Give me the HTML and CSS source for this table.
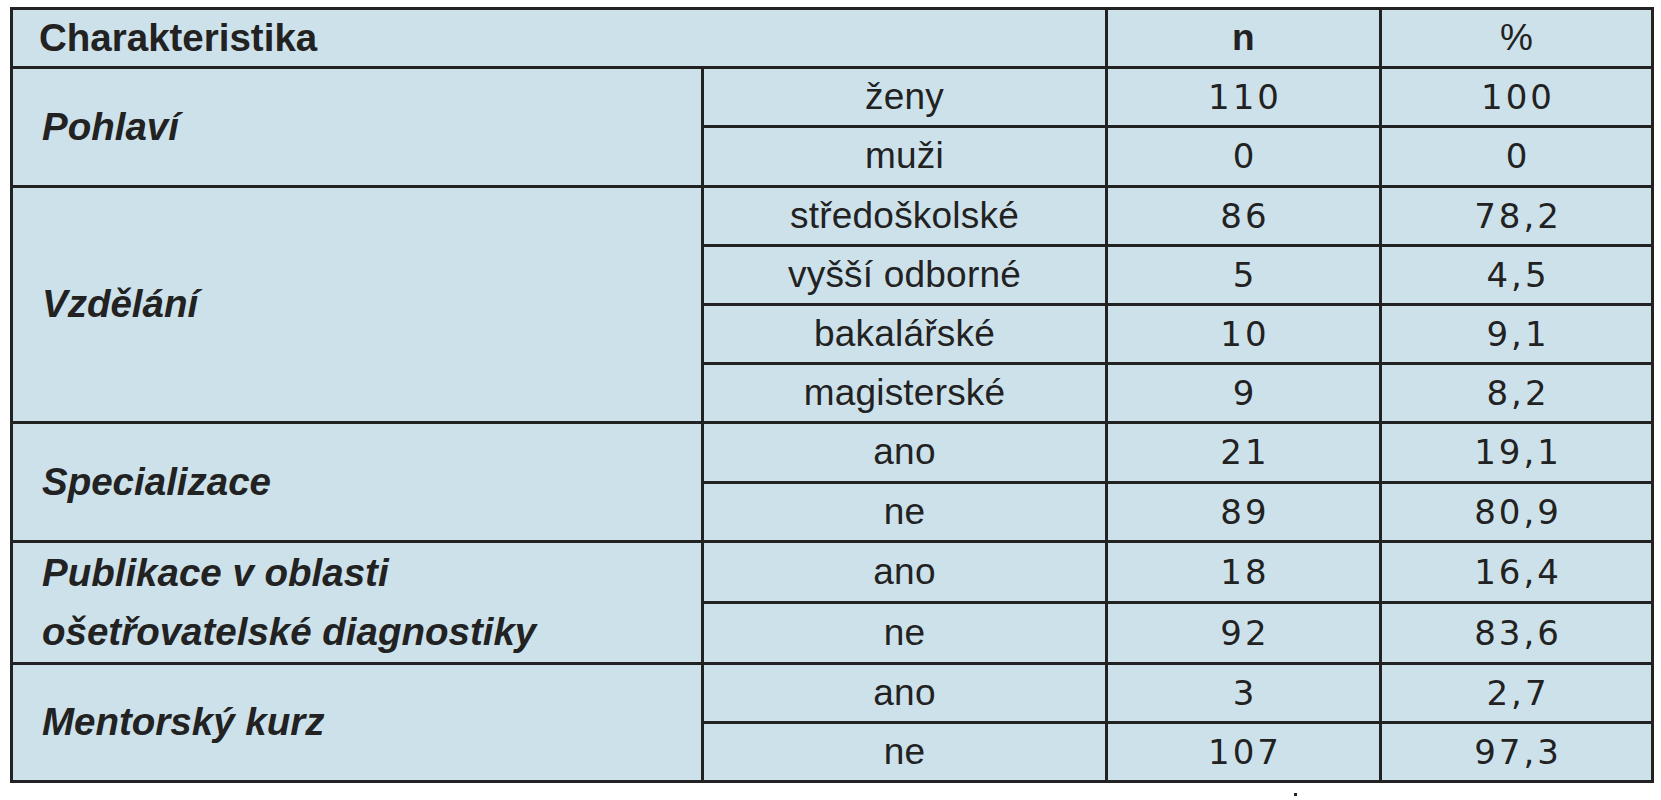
FILE: index.html
```html
<!DOCTYPE html>
<html lang="cs">
<head>
<meta charset="utf-8">
<title>Charakteristika souboru</title>
<link rel="stylesheet" href="styles.css">
</head>
<body>
<div class="page">
<table class="stats">
  <colgroup>
    <col class="c-label">
    <col class="c-sub">
    <col class="c-n">
    <col class="c-pct">
  </colgroup>
  <thead>
    <tr>
      <th class="head-label" colspan="2">Charakteristika</th>
      <th class="head-n">n</th>
      <th class="head-pct">%</th>
    </tr>
  </thead>
  <tbody>
    <tr>
      <td class="label" rowspan="2">Pohlaví</td>
      <td>ženy</td><td class="num">110</td><td class="num">100</td>
    </tr>
    <tr><td>muži</td><td class="num">0</td><td class="num">0</td></tr>
    <tr>
      <td class="label" rowspan="4">Vzdělání</td>
      <td>středoškolské</td><td class="num">86</td><td class="num">78,2</td>
    </tr>
    <tr><td>vyšší odborné</td><td class="num">5</td><td class="num">4,5</td></tr>
    <tr><td>bakalářské</td><td class="num">10</td><td class="num">9,1</td></tr>
    <tr><td>magisterské</td><td class="num">9</td><td class="num">8,2</td></tr>
    <tr>
      <td class="label" rowspan="2">Specializace</td>
      <td>ano</td><td class="num">21</td><td class="num">19,1</td>
    </tr>
    <tr><td>ne</td><td class="num">89</td><td class="num">80,9</td></tr>
    <tr>
      <td class="label label-two" rowspan="2">Publikace v oblasti<br>ošetřovatelské diagnostiky</td>
      <td>ano</td><td class="num">18</td><td class="num">16,4</td>
    </tr>
    <tr><td>ne</td><td class="num">92</td><td class="num">83,6</td></tr>
    <tr>
      <td class="label" rowspan="2">Mentorský kurz</td>
      <td>ano</td><td class="num">3</td><td class="num">2,7</td>
    </tr>
    <tr><td>ne</td><td class="num">107</td><td class="num">97,3</td></tr>
  </tbody>
</table>
<div class="speck"></div>
</div>
</body>
</html>
```

FILE: styles.css
```css
html, body {
  margin: 0;
  padding: 0;
  background: #ffffff;
}

.page {
  padding: 7px 0 0 10px;
}

.stats {
  border-collapse: collapse;
  table-layout: fixed;
  width: 1641px;
  background: #cde1ea;
  border: 3px solid #222222;
  font-family: "Liberation Sans", Arial, sans-serif;
  color: #222222;
}

.c-label { width: 691px; }
.c-sub { width: 404px; }
.c-n { width: 274px; }
.c-pct { width: 272px; }

.stats th,
.stats td {
  border: 3px solid #222222;
  height: 56.2px;
  padding: 0;
  text-align: center;
  vertical-align: middle;
  font-size: 37px;
  line-height: 40px;
  font-weight: normal;
  letter-spacing: 0.2px;
}

.stats .num {
  font-family: "DejaVu Sans", "Liberation Sans", sans-serif;
  font-size: 34px;
  letter-spacing: 3px;
  padding-left: 3px;
}

.stats .head-label {
  text-align: left;
  padding-left: 26px;
  font-weight: bold;
  font-size: 38.5px;
  letter-spacing: 0;
}

.stats .head-n {
  font-weight: bold;
}

.stats .label {
  text-align: left;
  padding-left: 29px;
  font-weight: bold;
  font-style: italic;
  font-size: 38.5px;
  letter-spacing: 0;
}

.stats .label-two {
  line-height: 59.5px;
}

.speck {
  width: 3px;
  height: 3px;
  background: #222222;
  margin: 10px 0 0 1284px;
}
```
